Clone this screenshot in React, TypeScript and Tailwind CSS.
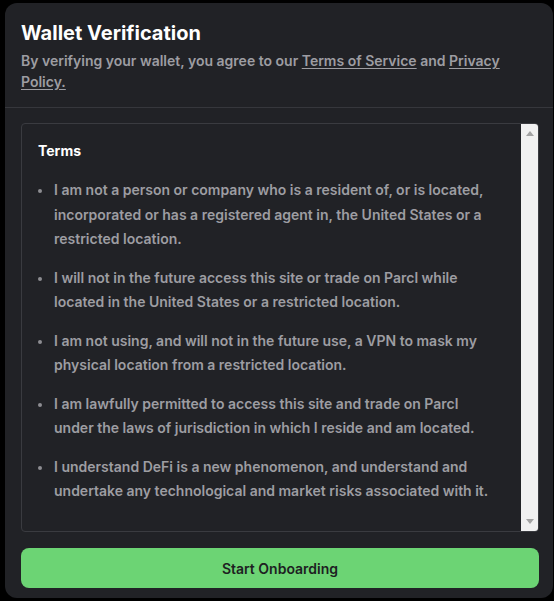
import React from "react";

const terms = [
  "I am not a person or company who is a resident of, or is located, incorporated or has a registered agent in, the United States or a restricted location.",
  "I will not in the future access this site or trade on Parcl while located in the United States or a restricted location.",
  "I am not using, and will not in the future use, a VPN to mask my physical location from a restricted location.",
  "I am lawfully permitted to access this site and trade on Parcl under the laws of jurisdiction in which I reside and am located.",
  "I understand DeFi is a new phenomenon, and understand and undertake any technological and market risks associated with it.",
];

export default function App() {
  return (
    <div
      className="h-[601px] w-[554px] overflow-hidden bg-black pl-[5px] pt-[3px]"
      style={{ fontFamily: "Inter, 'Noto Sans', sans-serif" }}
    >
      <div className="flex h-[595px] w-[548px] flex-col rounded-xl bg-[#212226]">
        <div className="px-4 pb-[15px] pt-4">
          <h1 className="text-[20px] font-bold leading-[28px] text-white">Wallet Verification</h1>
          <p className="mt-[3px] text-[14px] font-semibold leading-[21px] text-[#9d9da2]">
            By verifying your wallet, you agree to our{" "}
            <span className="underline underline-offset-2">Terms of Service</span> and{" "}
            <span className="underline underline-offset-2">Privacy Policy.</span>
          </p>
        </div>
        <div className="h-px bg-[#36373c]" />
        <div className="flex flex-col gap-4 px-4 pb-[10px] pt-[15px]">
          <div className="flex h-[409px] w-[518px] overflow-hidden rounded border border-[#3a3b40] bg-[#212226]">
            <div className="min-w-0 flex-1 pb-4 pl-4 pr-[22px] pt-[17px]">
              <div className="text-[14px] font-bold leading-5 text-white">Terms</div>
              <ul className="mt-[17px] flex flex-col gap-[14px]">
                {terms.map((t, i) => (
                  <li key={i} className="flex">
                    <div className="w-4 shrink-0 pt-[11px]">
                      <div className="h-1 w-1 rounded-full bg-[#8d8d92]" />
                    </div>
                    <span className="text-[14px] font-semibold leading-[24.5px] text-[#9d9da2]">{t}</span>
                  </li>
                ))}
              </ul>
            </div>
            <div className="flex w-[17px] shrink-0 flex-col items-center justify-between bg-[#f1f1f1] py-[7px]">
              <svg width="8" height="5" viewBox="0 0 8 5">
                <polygon points="0,5 8,5 4,0" fill="#a3a3a3" />
              </svg>
              <svg width="8" height="5" viewBox="0 0 8 5">
                <polygon points="0,0 8,0 4,5" fill="#a3a3a3" />
              </svg>
            </div>
          </div>
          <button className="h-10 w-[518px] rounded-lg bg-[#6cd474] text-[14px] font-semibold text-[#1e1f22]">
            Start Onboarding
          </button>
        </div>
      </div>
    </div>
  );
}
